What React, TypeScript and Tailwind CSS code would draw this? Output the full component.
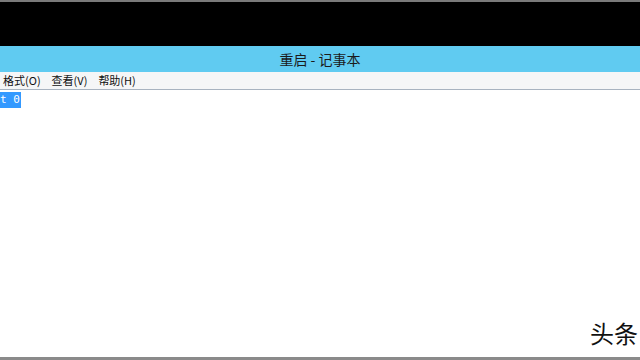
export default function App() {
  return (
    <div className="w-[640px] h-[360px] overflow-hidden flex flex-col bg-white" style={{ fontFamily: '"Noto Sans CJK SC", sans-serif' }}>
      <div className="h-[2px] bg-[#7a7a7a]" />
      <div className="h-[44px] bg-black" />
      {/* title bar */}
      <div className="h-[26px] bg-[#60cbf1] flex items-center justify-center text-[14px] text-[#1b1b1b]">
        重启 - 记事本
      </div>
      {/* menu bar */}
      <div className="h-[18px] bg-[#f5f6f7] border-b border-[#a8b3c0] flex items-center gap-[11px] pl-[3px] text-[11px] text-[#111] leading-none">
        <span>格式(O)</span>
        <span>查看(V)</span>
        <span>帮助(H)</span>
      </div>
      {/* editor */}
      <div className="flex-1 relative pt-[2px]">
        <div className="w-fit bg-[#3399ff] text-white text-[11px] leading-[16px] pr-[1px]" style={{ fontFamily: '"DejaVu Sans Mono", monospace' }}>
          t 0
        </div>
        <div className="absolute left-[590px] bottom-[12px] text-[24px] text-[#111] leading-none whitespace-nowrap">
          头条
        </div>
      </div>
      <div className="h-[3px] bg-[#8a8a8a]" />
    </div>
  )
}
